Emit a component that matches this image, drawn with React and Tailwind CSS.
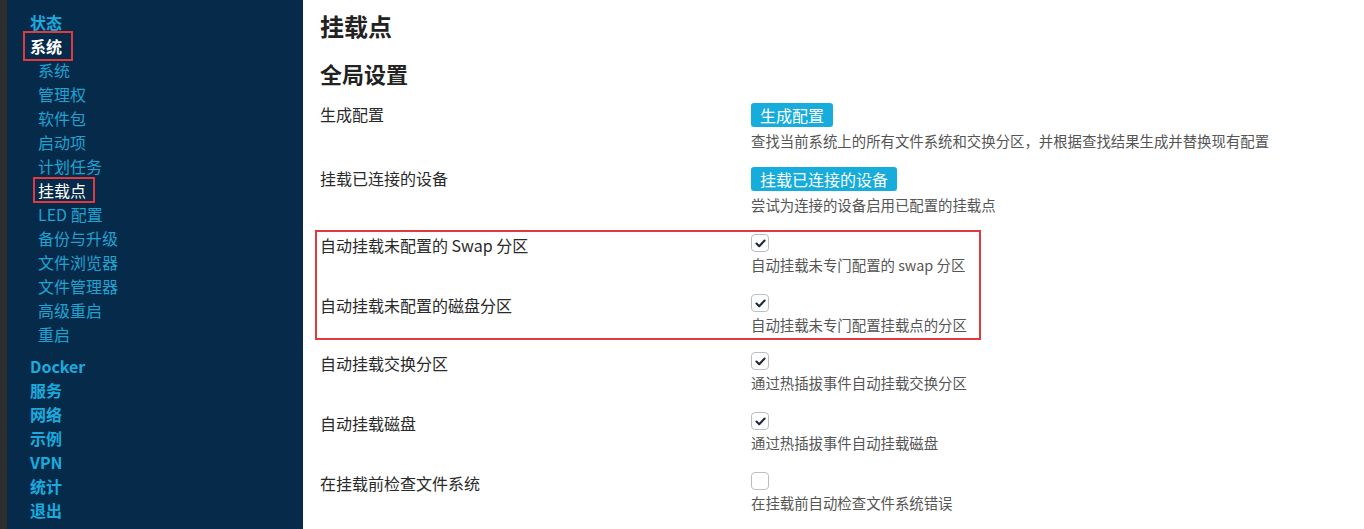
import React from "react";

const font = { fontFamily: '"Noto Sans CJK SC", "Noto Sans", sans-serif' };

function Top({ children, boxed }) {
  return (
    <div className="h-[24px] leading-[24px] pl-[23px] text-[16px] font-bold text-[#1aaade]">
      {boxed ? (
        <span className="relative inline-block text-white">
          {children}
          <span className="absolute -left-[7px] -right-[11px] -top-[3px] -bottom-[3px] border-2 border-[#e0393e]" />
        </span>
      ) : (
        children
      )}
    </div>
  );
}

function Sub({ children, boxed }) {
  return (
    <div className="h-[24px] leading-[24px] pl-[31px] text-[16px] text-[#1ea3d3]">
      {boxed ? (
        <span className="relative inline-block text-white">
          {children}
          <span className="absolute -left-[5px] -right-[9px] -top-[1px] -bottom-[1px] border-2 border-[#e0393e]" />
        </span>
      ) : (
        children
      )}
    </div>
  );
}

function Check({ checked }) {
  return (
    <div className="w-[18px] h-[18px] rounded-[4px] border border-[#b9bec6] bg-white flex items-center justify-center">
      {checked && (
        <svg width="11" height="9" viewBox="0 0 11 9">
          <path d="M1.5 4.6 L4.2 7.2 L9.6 1.6" fill="none" stroke="#1d2a3c" strokeWidth="2.1" strokeLinecap="round" strokeLinejoin="round" />
        </svg>
      )}
    </div>
  );
}

function ButtonRow({ label, btn, desc, className }) {
  return (
    <div className={"flex " + className}>
      <div className="w-[431px] text-[16px] leading-[22px] text-[#2a2a2a]">{label}</div>
      <div>
        <div className="inline-block h-[24px] leading-[24px] px-[9px] rounded-[3px] bg-[#16acdc] text-white text-[16px]">{btn}</div>
        <div className="mt-[4px] text-[14.4px] leading-[19px] text-[#555]">{desc}</div>
      </div>
    </div>
  );
}

function CheckRow({ label, desc, checked, className }) {
  return (
    <div className={"flex " + className}>
      <div className="w-[431px] text-[16px] leading-[22px] text-[#2a2a2a]">{label}</div>
      <div>
        <Check checked={checked} />
        <div className="mt-[3px] text-[14.4px] leading-[19px] text-[#555]">{desc}</div>
      </div>
    </div>
  );
}

export default function App() {
  return (
    <div className="flex h-[529px] w-[1364px] overflow-hidden bg-white" style={font}>
      <div className="w-[7px] bg-[#2e2e2e]" />
      <div className="w-[296px] bg-[#062a49] pt-[10px]">
        <Top>状态</Top>
        <Top boxed>系统</Top>
        <Sub>系统</Sub>
        <Sub>管理权</Sub>
        <Sub>软件包</Sub>
        <Sub>启动项</Sub>
        <Sub>计划任务</Sub>
        <Sub boxed>挂载点</Sub>
        <Sub>LED 配置</Sub>
        <Sub>备份与升级</Sub>
        <Sub>文件浏览器</Sub>
        <Sub>文件管理器</Sub>
        <Sub>高级重启</Sub>
        <Sub>重启</Sub>
        <div className="h-[8px]" />
        <Top>Docker</Top>
        <Top>服务</Top>
        <Top>网络</Top>
        <Top>示例</Top>
        <Top>VPN</Top>
        <Top>统计</Top>
        <Top>退出</Top>
      </div>
      <div className="flex-1 pl-[17px] pt-[10px]">
        <div className="text-[24px] leading-[32px] font-bold text-[#222]">挂载点</div>
        <div className="mt-[16px] text-[22px] leading-[30px] font-bold text-[#222]">全局设置</div>
        <ButtonRow
          className="mt-[15px]"
          label="生成配置"
          btn="生成配置"
          desc="查找当前系统上的所有文件系统和交换分区，并根据查找结果生成并替换现有配置"
        />
        <ButtonRow
          className="mt-[17px]"
          label="挂载已连接的设备"
          btn="挂载已连接的设备"
          desc="尝试为连接的设备启用已配置的挂载点"
        />
        <div className="mt-[16px] -ml-[5px] w-[666px] border-2 border-[#e0393e] pl-[3px] pt-[2px] pb-[4px]">
          <CheckRow label="自动挂载未配置的 Swap 分区" desc="自动挂载未专门配置的 swap 分区" checked />
          <CheckRow className="mt-[20px]" label="自动挂载未配置的磁盘分区" desc="自动挂载未专门配置挂载点的分区" checked />
        </div>
        <CheckRow className="mt-[12px]" label="自动挂载交换分区" desc="通过热插拔事件自动挂载交换分区" checked />
        <CheckRow className="mt-[20px]" label="自动挂载磁盘" desc="通过热插拔事件自动挂载磁盘" checked />
        <CheckRow className="mt-[20px]" label="在挂载前检查文件系统" desc="在挂载前自动检查文件系统错误" />
      </div>
    </div>
  );
}
